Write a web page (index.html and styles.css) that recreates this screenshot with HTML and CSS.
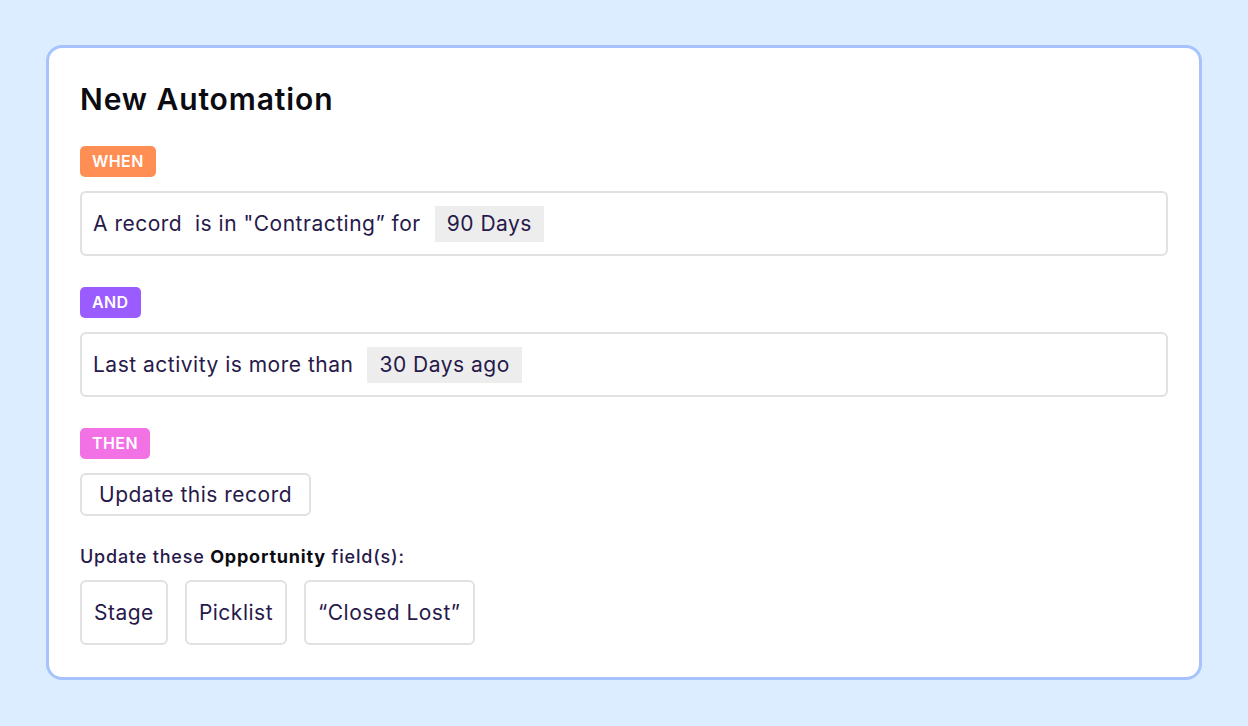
FILE: index.html
```html
<!DOCTYPE html>
<html lang="en">
<head>
    <meta charset="UTF-8">
    <title>New Automation</title>
    <link rel="stylesheet" href="styles.css">
</head>
<body>
    <div class="card">
        <h1>New Automation</h1>

        <!-- trigger -->
        <span class="tag tag-when">WHEN</span>
        <div class="rule">A record&nbsp; is in "Contracting” for<span class="value">90 Days</span></div>

        <span class="tag tag-and">AND</span>
        <div class="rule">Last activity is more than<span class="value">30 Days ago</span></div>

        <!-- action -->
        <span class="tag tag-then">THEN</span>
        <div class="action">Update this record</div>

        <p class="label">Update these <b>Opportunity</b> field(s):</p>
        <div class="fields">
            <div class="field">Stage</div>
            <div class="field">Picklist</div>
            <div class="field">“Closed Lost”</div>
        </div>
    </div>
</body>
</html>
```

FILE: styles.css
```css
body {
    margin: 0;
    padding: 45px 46px;
    background-color: #dbedfe;
    font-family: Inter, 'Noto Sans', sans-serif;
    color: #27194a;
}

.card {
    background-color: #fff;
    border: 3px solid #a6c2ff;
    border-radius: 16px;
    padding: 33px 31px 32px 31px;
    display: flex;
    flex-direction: column;
    align-items: flex-start;
}

h1 {
    margin: 0 0 29px;
    font-size: 30px;
    line-height: 36px;
    font-weight: 600;
    letter-spacing: 0.9px;
    color: #0b0b12;
}

.tag {
    display: inline-block;
    height: 31px;
    line-height: 31px;
    padding: 0 12px;
    border-radius: 5px;
    color: #fff;
    font-size: 16px;
    font-weight: 600;
    letter-spacing: 0.4px;
    margin-bottom: 14px;
}

.tag-when { background-color: #ff8e55; }
.tag-and { background-color: #9b5cff; }
.tag-then { background-color: #f271e4; }

.rule {
    align-self: stretch;
    box-sizing: border-box;
    height: 65px;
    display: flex;
    align-items: center;
    gap: 14px;
    padding: 0 11px;
    border: 2px solid #e1e1e1;
    border-radius: 6px;
    font-size: 21px;
    letter-spacing: 0.5px;
    margin-bottom: 31px;
    white-space: pre;
}

.value {
    background-color: #ededed;
    padding: 6px 12px;
    line-height: 24px;
}

.action {
    box-sizing: border-box;
    height: 43px;
    display: flex;
    align-items: center;
    padding: 0 17px;
    border: 2px solid #e1e1e1;
    border-radius: 6px;
    font-size: 21px;
    letter-spacing: 0.5px;
}

.label {
    margin: 30px 0 12px;
    font-size: 18px;
    font-weight: 500;
    line-height: 22px;
    letter-spacing: 0.8px;
}

.label b {
    color: #0b0b12;
    font-weight: 700;
}

.fields {
    display: flex;
    gap: 17px;
}

.field {
    box-sizing: border-box;
    height: 65px;
    display: flex;
    align-items: center;
    padding: 0 12px;
    border: 2px solid #e1e1e1;
    border-radius: 6px;
    font-size: 21px;
    letter-spacing: 0.5px;
}
```
